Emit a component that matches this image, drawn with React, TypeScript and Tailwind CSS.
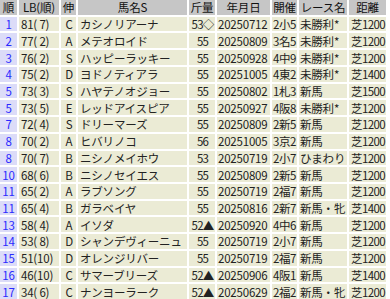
import React from 'react'

type Row = {
  rank: string
  lb: string
  lbHi?: 'cyan' | 'green'
  nobi: string
  name: string
  kin: string
  date: string
  kaisai: string
  race: string
  dist: string
}

const rows: Row[] = [
  { rank: '1', lb: '81( 7)', nobi: 'C', name: 'カシノリアーナ', kin: '53◇', date: '20250712', kaisai: '2小5', race: '未勝利*', dist: '芝1200' },
  { rank: '2', lb: '77( 2)', lbHi: 'cyan', nobi: 'A', name: 'メテオロイド', kin: '55', date: '20250809', kaisai: '3名5', race: '未勝利*', dist: '芝1200' },
  { rank: '3', lb: '76( 2)', lbHi: 'cyan', nobi: 'S', name: 'ハッピーラッキー', kin: '55', date: '20250928', kaisai: '4中9', race: '未勝利*', dist: '芝1200' },
  { rank: '4', lb: '75( 2)', lbHi: 'cyan', nobi: 'D', name: 'ヨドノティアラ', kin: '55', date: '20251005', kaisai: '4東2', race: '未勝利*', dist: '芝1400' },
  { rank: '5', lb: '73( 3)', lbHi: 'green', nobi: 'S', name: 'ハヤテノオジョー', kin: '55', date: '20250802', kaisai: '1札3', race: '新馬', dist: '芝1500' },
  { rank: '5', lb: '73( 5)', nobi: 'E', name: 'レッドアイスピア', kin: '55', date: '20250927', kaisai: '4阪8', race: '未勝利*', dist: '芝1200' },
  { rank: '7', lb: '72( 4)', nobi: 'S', name: 'ドリーマーズ', kin: '55', date: '20250809', kaisai: '2新5', race: '新馬', dist: '芝1200' },
  { rank: '8', lb: '70( 2)', lbHi: 'cyan', nobi: 'A', name: 'ヒバリノコ', kin: '56', date: '20251005', kaisai: '3京2', race: '新馬', dist: '芝1200' },
  { rank: '8', lb: '70( 7)', nobi: 'B', name: 'ニシノメイホウ', kin: '53', date: '20250719', kaisai: '2小7', race: 'ひまわり', dist: '芝1200' },
  { rank: '10', lb: '68( 6)', nobi: 'B', name: 'ニシノセイエス', kin: '55', date: '20250809', kaisai: '2新5', race: '新馬', dist: '芝1200' },
  { rank: '11', lb: '65( 2)', lbHi: 'cyan', nobi: 'A', name: 'ラブソング', kin: '55', date: '20250719', kaisai: '2福7', race: '新馬', dist: '芝1200' },
  { rank: '11', lb: '65( 4)', nobi: 'B', name: 'ガラベイヤ', kin: '55', date: '20250816', kaisai: '2新7', race: '新馬・牝', dist: '芝1400' },
  { rank: '13', lb: '58( 4)', nobi: 'A', name: 'イソダ', kin: '52▲', date: '20250920', kaisai: '4中6', race: '新馬', dist: '芝1200' },
  { rank: '14', lb: '53( 8)', nobi: 'D', name: 'シャンデヴィーニュ', kin: '55', date: '20250719', kaisai: '2小7', race: '新馬', dist: '芝1200' },
  { rank: '15', lb: '51(10)', nobi: 'D', name: 'オレンジリバー', kin: '55', date: '20250719', kaisai: '2福7', race: '新馬', dist: '芝1200' },
  { rank: '16', lb: '46(10)', nobi: 'C', name: 'サマーブリーズ', kin: '52▲', date: '20250906', kaisai: '4阪1', race: '新馬', dist: '芝1400' },
  { rank: '17', lb: '34( 6)', nobi: 'C', name: 'ナンヨーラーク', kin: '52▲', date: '20250629', kaisai: '2福2', race: '新馬・牝', dist: '芝1200' },
]

const nobiColor: Record<string, string> = {
  C: 'text-[#78a010]',
  A: 'text-[#3c9a1c]',
  S: 'text-[#3c9a1c]',
  D: 'text-[#2a8c2a]',
  E: 'text-[#3c9a1c]',
  B: 'text-[#3c9a1c]',
}

const head = 'bg-[#c6c6c6] text-[#111] flex items-center justify-center whitespace-nowrap'
const cell = 'bg-[#ebebd5] text-[#222] flex items-center pl-[1px] whitespace-pre'

export default function App() {
  return (
    <div className="w-[390px] h-[299px] bg-white font-['Noto_Sans_CJK_JP','Noto_Sans',sans-serif] text-[11.5px] leading-[14px] tracking-[-0.2px]">
      <div className="grid grid-cols-[17px_40px_15px_109px_26px_53px_25px_48px_37px] grid-rows-[repeat(18,1fr)] gap-[2px] h-[299px] w-[386px]">
        {/* Header */}
        <div className={head}>順</div>
        <div className={head}>LB(順)</div>
        <div className={head}>伸</div>
        <div className={head}>馬名S</div>
        <div className={head}>斤量</div>
        <div className={head}>年月日</div>
        <div className={head}>開催</div>
        <div className={head}>レース名</div>
        <div className={head}>距離</div>

        {rows.map((r, i) => (
          <React.Fragment key={i}>
            <div className="bg-[#dcdcf8] text-[#2a2aff] flex items-center justify-center">{r.rank}</div>
            <div
              className={`${cell} pl-[2px] ${r.lbHi === 'cyan' ? 'bg-[#00ffff]' : r.lbHi === 'green' ? 'bg-[#00f000]' : ''}`}
            >
              {r.lb}
            </div>
            <div className={`${cell} justify-center pl-0 ${nobiColor[r.nobi]}`}>{r.nobi}</div>
            <div className={`${cell} pl-[2px]`}>{r.name}</div>
            <div className={`${cell} justify-center pl-0 tracking-[-0.8px]`}>{r.kin}</div>
            <div className={cell}>{r.date}</div>
            <div className={`${cell} tracking-[-0.5px]`}>{r.kaisai}</div>
            <div className={cell}>{r.race}</div>
            <div className={`${cell} pl-[2px] tracking-[-0.6px] text-[#2a2aff]`}>{r.dist}</div>
          </React.Fragment>
        ))}
      </div>
    </div>
  )
}
